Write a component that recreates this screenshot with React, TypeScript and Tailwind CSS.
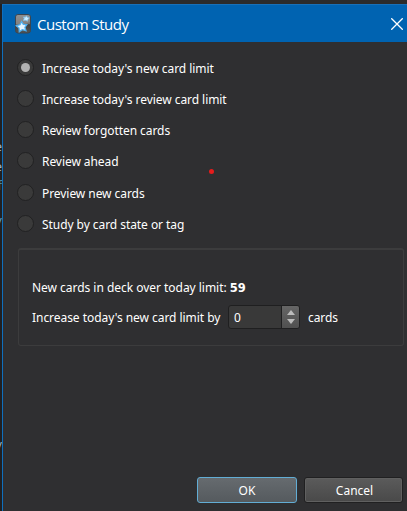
const options = [
  { label: "Increase today's new card limit", row: "h-[31px]" },
  { label: "Increase today's review card limit", row: "h-[31px]" },
  { label: "Review forgotten cards", row: "h-[31px]" },
  { label: "Review ahead", row: "h-[32px]" },
  { label: "Preview new cards", row: "h-[31px]" },
  { label: "Study by card state or tag", row: "h-[31px]" },
];

function AppIcon() {
  return (
    <svg width="16" height="20" viewBox="0 0 16 20" className="shrink-0">
      <defs>
        <linearGradient id="tile" x1="0" y1="0" x2="0" y2="1">
          <stop offset="0" stopColor="#8b8b8b" />
          <stop offset="0.5" stopColor="#707070" />
          <stop offset="0.55" stopColor="#3d3d3d" />
          <stop offset="1" stopColor="#555" />
        </linearGradient>
      </defs>
      <rect x="0.5" y="0.5" width="15" height="18.5" rx="2.5" fill="url(#tile)" stroke="#3c4650" />
      <path d="M1 13 Q7 12 15 8 V3 Q15 1 13 1 H3 Q1 1 1 3Z" fill="#999" opacity=".45" />
      <path d="M6.5 7.5 L8.3 10.3 L11.8 10.5 L9.9 13.3 L11 16.7 L7.3 15.6 L4.3 17.7 L4 14.1 L1.3 11.7 L5 10.7Z" fill="#e4f5ff" stroke="#4fb0f0" strokeWidth="1.3" />
      <path d="M11.4 1.8 L12.3 3.3 L14.4 4 L12.9 5.4 L12.5 7.2 L10.6 6.3 L8.4 6.5 L9.2 4.6 L8.4 3 L10.4 3.2Z" fill="#cfeeff" stroke="#78bde8" strokeWidth=".8" />
    </svg>
  );
}

export default function App() {
  return (
    <div className="flex h-[511px] w-[407px] overflow-hidden bg-[#2b2b2b] pt-1 font-['Noto_Sans','Open_Sans',sans-serif] text-[12px] text-white">
      <div className="flex w-[2px] shrink-0 flex-col items-end overflow-hidden bg-[#202022] pt-[134px] text-[13px] leading-4 text-[#9fb4c4]">
        <span className="h-5">e</span>
        <span className="h-[19px]">e</span>
        <span className="h-[35px] text-[#4d86a0]">f</span>
        <span className="h-[226px] text-[#5f9bc4]">y</span>
        <span>/</span>
      </div>
      <div className="flex w-[405px] shrink-0 flex-col border-l border-[#0f6fbd] bg-[#2f2f31]">
        <header className="flex h-[38px] shrink-0 items-center border-t border-[#1870b8] bg-[#0063b1] pl-3">
          <AppIcon />
          <h1 className="ml-[6px] font-['Open_Sans','Noto_Sans',sans-serif] text-[15px] leading-5 tracking-[-0.5px] whitespace-nowrap">Custom Study</h1>
          <svg width="12" height="12" viewBox="0 0 12 12" className="mr-[4px] ml-auto" fill="none" stroke="#fff" strokeWidth="1.3">
            <path d="M0.3 0.3 L11.7 11.7 M11.7 0.3 L0.3 11.7" />
          </svg>
        </header>
        <main className="flex grow flex-col">
          <div className="flex flex-col pt-[10px] pl-[14px]">
            {options.map((o, i) => (
              <label key={o.label} className={`flex items-center ${o.row}`}>
                <span className="-mt-px flex size-[17px] shrink-0 items-center justify-center rounded-full border border-[#212122] bg-[#3a3a3a]">
                  {i === 0 && <span className="size-[9px] rounded-full bg-[#b2b2b2]" />}
                </span>
                <span className="mt-[2px] ml-2 tracking-[-0.06px] whitespace-nowrap">{o.label}</span>
              </label>
            ))}
          </div>
          <section className="mt-[9px] ml-[15px] h-[98px] w-[386px] rounded-[3px] border border-t-2 border-[#3c3c3d] pl-[13px]">
            <p className="mt-[28px] h-[20px] leading-5 tracking-[-0.03px] whitespace-nowrap">
              New cards in deck over today limit: <b className="font-['DejaVu_Sans',sans-serif] text-[11.5px]">59</b>
            </p>
            <div className="mt-[7px] flex h-6 items-center whitespace-nowrap">
              <span className="mt-[2px] w-[196px] tracking-[-0.05px]">Increase today's new card limit by</span>
              <div className="flex h-6 w-[72px] shrink-0 overflow-hidden rounded-[3px] border border-[#1f1f20] bg-[#393939]">
                <span className="grow pt-px pl-[5px] leading-[22px]">0</span>
                <span className="flex w-[18px] flex-col items-center justify-center gap-[4px] border-l border-[#1f1f20] bg-linear-to-b from-[#666] to-[#505050]">
                  <svg width="8" height="5" viewBox="0 0 8 5"><path d="M0 5 L4 0 L8 5Z" fill="#bcbcbc" /></svg>
                  <svg width="8" height="5" viewBox="0 0 8 5"><path d="M0 0 L4 5 L8 0Z" fill="#bcbcbc" /></svg>
                </span>
              </div>
              <span className="mt-[2px] ml-2 tracking-[-0.1px]">cards</span>
            </div>
          </section>
          <footer className="mt-auto mb-[8px] flex gap-[7px] pl-[194px]">
            <button className="h-[26px] w-[100px] rounded-[3px] border border-[#62add5] bg-linear-to-b from-[#666b6f] to-[#555a5e] pt-px">OK</button>
            <button className="h-[26px] w-[99px] rounded-[3px] border border-[#202021] bg-linear-to-b from-[#5b5b5b] to-[#494949] pt-px pl-[2px] shadow-[inset_0_0_0_1px_#606060]">Cancel</button>
          </footer>
        </main>
      </div>
      <span className="absolute top-[168.5px] left-[208.5px] size-[5px] rounded-full bg-[#e51c1c]" />
    </div>
  );
}
